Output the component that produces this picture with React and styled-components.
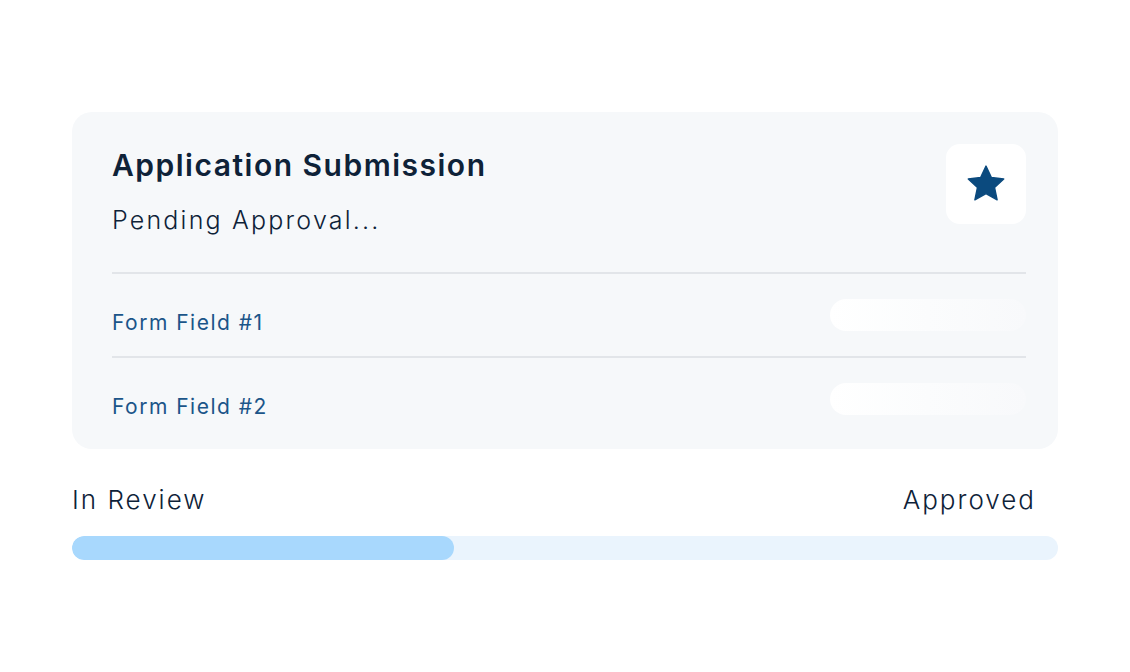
import React from 'react';
import styled, { createGlobalStyle } from 'styled-components';

const GlobalStyle = createGlobalStyle`
    html, body {
        margin: 0;
        padding: 0;
        background: #ffffff;
        font-family: Inter, 'Noto Sans', sans-serif;
    }
`;

const fields = ['Form Field #1', 'Form Field #2'];

export default function App() {
    const progress = 38.7;
    return (
        <>
            <GlobalStyle />
            <Page>
                <Card>
                    <Header>
                        <TitleBox>
                            <Title>Application Submission</Title>
                            <Subtitle>Pending Approval...</Subtitle>
                        </TitleBox>
                        <StarBox>
                            <svg width="42" height="40" viewBox="0 0 24 23">
                                <path
                                    d="M12 1.2l3.1 6.6 7.1.8-5.3 4.9 1.5 7.1L12 17l-6.4 3.6 1.5-7.1L1.8 8.6l7.1-.8z"
                                    fill="#0b4a7e"
                                    stroke="#0b4a7e"
                                    strokeWidth="0.8"
                                    strokeLinejoin="round"
                                />
                            </svg>
                        </StarBox>
                    </Header>
                    {fields.map((f) => (
                        <FieldRow key={f}>
                            <FieldLabel>{f}</FieldLabel>
                            <Pill />
                        </FieldRow>
                    ))}
                </Card>
                <Labels>
                    <StatusLabel>In Review</StatusLabel>
                    <StatusLabel>Approved</StatusLabel>
                </Labels>
                <Track>
                    <Fill style={{ width: `${progress}%` }} />
                </Track>
            </Page>
        </>
    );
}

const Page = styled.div`
    width: 986px;
    margin: 0 auto;
    padding-top: 112px;
`;

const Card = styled.div`
    background: #f6f8fa;
    border-radius: 20px;
    padding: 32px 32px 9px 40px;
`;

const Header = styled.div`
    display: flex;
    justify-content: space-between;
    align-items: flex-start;
    padding-bottom: 37px;
    border-bottom: 2px solid #e2e5e9;
`;

const TitleBox = styled.div`
    padding-top: 3px;
`;

const Title = styled.h1`
    margin: 0;
    font-size: 30px;
    font-weight: 600;
    line-height: 37px;
    color: #0e2238;
    letter-spacing: 1.5px;
`;

const Subtitle = styled.p`
    margin: 21px 0 0;
    font-size: 25px;
    font-weight: 300;
    color: #0e2238;
    letter-spacing: 2.2px;
`;

const StarBox = styled.div`
    width: 80px;
    height: 80px;
    border-radius: 14px;
    background: #ffffff;
    display: flex;
    align-items: center;
    justify-content: center;
`;

const FieldRow = styled.div`
    display: flex;
    justify-content: space-between;
    align-items: center;
    height: 82px;
    & + & {
        border-top: 2px solid #e2e5e9;
    }
`;

const FieldLabel = styled.span`
    font-size: 21px;
    font-weight: 400;
    color: #1b5589;
    padding-top: 14px;
    letter-spacing: 1.5px;
`;

const Pill = styled.div`
    width: 196px;
    height: 32px;
    border-radius: 16px;
    background: linear-gradient(90deg, #ffffff 0%, #fbfcfd 50%, #f8f9fb 100%);
`;

const Labels = styled.div`
    display: flex;
    justify-content: space-between;
    padding: 35px 22px 0 0;
`;

const StatusLabel = styled.span`
    font-size: 26px;
    font-weight: 300;
    color: #0e2238;
    letter-spacing: 2px;
`;

const Track = styled.div`
    margin-top: 21px;
    height: 24px;
    border-radius: 12px;
    background: #eaf4fd;
    overflow: hidden;
`;

const Fill = styled.div`
    height: 100%;
    border-radius: 12px;
    background: #a8d8fd;
`;
